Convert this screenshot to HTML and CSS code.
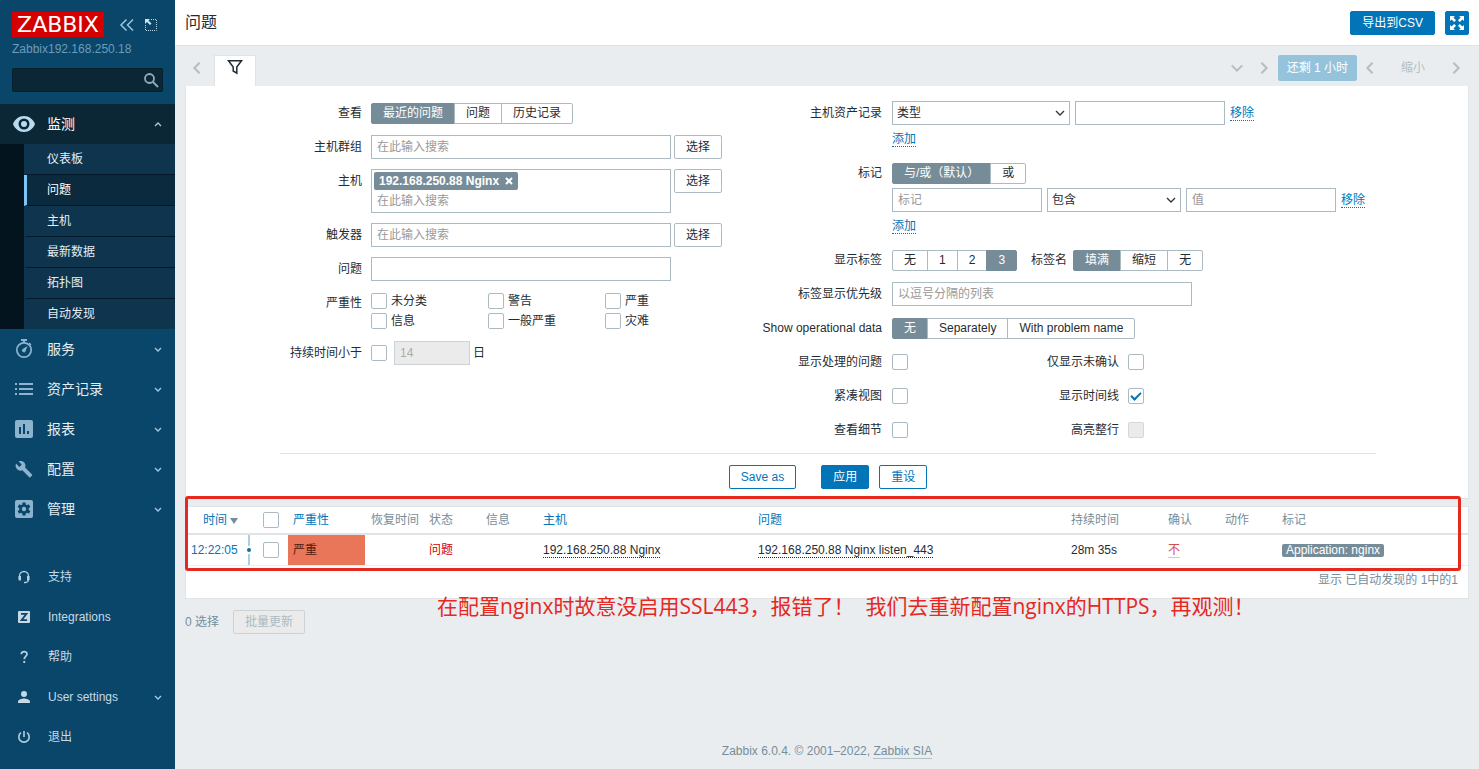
FILE: index.html
```html
<!DOCTYPE html>
<html lang="zh-CN">
<head>
<meta charset="utf-8">
<meta name="viewport" content="width=device-width, initial-scale=1">
<title>问题</title>
<link rel="stylesheet" href="styles.css">
</head>
<body>
<aside class="sidebar">
  <div class="side-head">
    <div class="brand">
      <a class="logo" href="#">ZABBIX</a>
      <button class="icon-btn" type="button" aria-label="收起"><svg width="16" height="16" viewBox="0 0 16 16" fill="none" stroke="#9fc4dd" stroke-width="1.5"><path d="M7.5 2.5 2 8l5.500 5.500M14 2.500 8.500 8l5.500 5.500"/></svg></button>
      <button class="icon-btn" type="button" aria-label="隐藏"><svg width="16" height="16" viewBox="0 0 16 16"><path d="M8 2.500h5.500v11h-11V8" fill="none" stroke="#b9d6e8" stroke-dasharray="1 1"/><path d="M2 2h5L5.500 3.500 8.500 6.500l-1.500 1.500-3-3L2 7z" fill="#cfe3f0"/></svg></button>
    </div>
    <div class="server">Zabbix192.168.250.18</div>
    <form class="search">
      <input type="text" aria-label="搜索">
      <button class="icon-btn" type="button" aria-label="搜索"><svg width="16" height="16" viewBox="0 0 16 16" fill="none" stroke="#8fadbe" stroke-width="1.800"><circle cx="6.500" cy="6.500" r="4.500"/><path d="m10 10 5 5"/></svg></button>
    </form>
  </div>
  <nav class="menu">
    <a class="item open" href="#"><svg class="ico" viewBox="0 0 24 24"><path fill="#b9dbf0" fill-rule="evenodd" d="M12 4C7 4 2.700 7.300 1 12c1.700 4.700 6 8 11 8s9.300-3.300 11-8c-1.700-4.700-6-8-11-8zm0 13.500a5.500 5.500 0 1 1 0-11 5.500 5.500 0 0 1 0 11zM12 9a3 3 0 1 0 0 6 3 3 0 0 0 0-6z"/></svg><span>监测</span><svg class="chev" viewBox="0 0 8 8"><path d="m1 6 3-3 3 3"/></svg></a>
    <div class="submenu">
      <a href="#">仪表板</a>
      <a class="active" href="#">问题</a>
      <a href="#">主机</a>
      <a href="#">最新数据</a>
      <a href="#">拓扑图</a>
      <a href="#">自动发现</a>
    </div>
    <a class="item" href="#"><svg class="ico" viewBox="0 0 24 24"><path d="M9 3h6" stroke="#8cb4cf" stroke-width="2"/><circle cx="12" cy="13" r="7.200" fill="none" stroke="#8cb4cf" stroke-width="1.700"/><path d="m15.500 9-2 5.200a1.800 1.800 0 1 1-2.700-2.200zM17.500 5.500l2 2-1 1-2-2zM11 3h2v3h-2z" fill="#8cb4cf"/></svg><span>服务</span><svg class="chev" viewBox="0 0 8 8"><path d="m1 3 3 3 3-3"/></svg></a>
    <a class="item" href="#"><svg class="ico" viewBox="0 0 24 24"><path fill="#8cb4cf" d="M3 6h2v2H3zm0 5h2v2H3zm0 5h2v2H3zM7 6h14v2H7zm0 5h14v2H7zm0 5h14v2H7z"/></svg><span>资产记录</span><svg class="chev" viewBox="0 0 8 8"><path d="m1 3 3 3 3-3"/></svg></a>
    <a class="item" href="#"><svg class="ico" viewBox="0 0 24 24"><path fill="#8cb4cf" fill-rule="evenodd" d="M5 3h14a2 2 0 0 1 2 2v14a2 2 0 0 1-2 2H5a2 2 0 0 1-2-2V5a2 2 0 0 1 2-2zm2 7v7h2v-7zm4-3v10h2V7zm4 7v3h2v-3z"/></svg><span>报表</span><svg class="chev" viewBox="0 0 8 8"><path d="m1 3 3 3 3-3"/></svg></a>
    <a class="item" href="#"><svg class="ico" viewBox="-1 -1 26 26"><path fill="#8cb4cf" d="m20.700 18-7.500-7.500c.8-1.900.4-4.200-1.200-5.700-1.600-1.700-4-2-6-1.100l3.500 3.500L7 9.700 3.400 6.100C2.400 8 2.800 10.500 4.500 12.200c1.500 1.500 3.800 2 5.700 1.200l7.500 7.500c.4.400.9.400 1.200 0l1.800-1.800c.4-.3.400-.9 0-1.100z"/></svg><span>配置</span><svg class="chev" viewBox="0 0 8 8"><path d="m1 3 3 3 3-3"/></svg></a>
    <a class="item" href="#"><svg class="ico" viewBox="0 0 24 24"><rect x="3" y="3" width="18" height="18" rx="2" fill="#8cb4cf"/><path d="M12 5.500v13M6.400 8.700l11.200 6.600M6.400 15.300l11.200-6.600" stroke="#0a466a" stroke-width="3.200"/><circle cx="12" cy="12" r="4.800" fill="#0a466a"/><circle cx="12" cy="12" r="2.200" fill="#8cb4cf"/></svg><span>管理</span><svg class="chev" viewBox="0 0 8 8"><path d="m1 3 3 3 3-3"/></svg></a>
  </nav>
  <nav class="menu user-menu">
    <a class="item" href="#"><svg class="ico" viewBox="0 0 24 24"><path d="M7.500 14v-3a4.500 4.500 0 0 1 9 0v4a3 3 0 0 1-3 2.500H12" fill="none" stroke="#b5cfdf" stroke-width="1.300"/><path d="M6.500 11H9v4.500H7.500a1 1 0 0 1-1-1zM15 11h2.500v3.500a1 1 0 0 1-1 1H15z" fill="#b5cfdf"/></svg><span>支持</span></a>
    <a class="item" href="#"><svg class="ico" viewBox="0 0 24 24"><rect x="6" y="6" width="12" height="12" rx="1" fill="#c5d8e4"/><path d="M9 8.800h5.500L9.500 15.200H15" fill="none" stroke="#0a466a" stroke-width="1.700"/></svg><span>Integrations</span></a>
    <a class="item" href="#"><svg class="ico" viewBox="0 0 24 24"><path d="M9.300 9.300C9.300 5.800 15 5.800 15 9c0 2.300-2.800 2.400-2.800 5.200" fill="none" stroke="#b5cfdf" stroke-width="1.700"/><path d="M11.300 16h1.900v2h-1.900z" fill="#b5cfdf"/></svg><span>帮助</span></a>
    <a class="item" href="#"><svg class="ico" viewBox="0 0 24 24"><circle cx="12" cy="9" r="3" fill="#c5d8e4"/><path d="M6 18v-1.500c0-2 4-3 6-3s6 1 6 3V18z" fill="#c5d8e4"/></svg><span>User settings</span><svg class="chev" viewBox="0 0 8 8"><path d="m1 3 3 3 3-3"/></svg></a>
    <a class="item" href="#"><svg class="ico" viewBox="0 0 24 24"><path d="M12 6v6M9 7.700a5.200 5.200 0 1 0 6 0" fill="none" stroke="#b5cfdf" stroke-width="1.600"/></svg><span>退出</span></a>
  </nav>
</aside>

<div class="page">
  <header class="topbar">
    <h1>问题</h1>
    <button class="btn primary" type="button">导出到CSV</button>
    <button class="btn primary square" type="button" aria-label="全屏"><svg width="16" height="16" viewBox="0 0 16 16"><path fill="#fff" d="M1 1h5L4.400 2.600 7 5.200 5.200 7 2.600 4.400 1 6zM15 1v5l-1.600-1.600L10.800 7 9 5.200l2.600-2.600L10 1zM1 15v-5l1.600 1.600L5.200 9 7 10.800l-2.600 2.600L6 15zM15 15h-5l1.600-1.600L9 10.800 10.800 9l2.600 2.600L15 10z"/></svg></button>
  </header>

  <main class="content">
    <div class="tabs">
      <button class="nav-btn" type="button" aria-label="上一个"><svg viewBox="0 0 16 16"><path d="m11 2-6 6 6 6"/></svg></button>
      <button class="tab" type="button" aria-label="过滤器"><svg width="16" height="16" viewBox="0 0 16 16"><path d="M1.500 1.800h13L9.800 8v6.200L6.200 12V8z" fill="none" stroke="#1f2c33" stroke-width="1.500"/></svg></button>
      <div class="time-nav">
        <button class="nav-btn" type="button" aria-label="展开"><svg viewBox="0 0 16 16"><path d="m2 5 6 6 6-6"/></svg></button>
        <button class="nav-btn" type="button" aria-label="下一个"><svg viewBox="0 0 16 16"><path d="m5 2 6 6-6 6"/></svg></button>
        <button class="range" type="button">还剩 1 小时</button>
        <button class="nav-btn" type="button" aria-label="向前"><svg viewBox="0 0 16 16"><path d="m11 2-6 6 6 6"/></svg></button>
        <button class="zoom-out" type="button" disabled>缩小</button>
        <button class="nav-btn" type="button" aria-label="向后"><svg viewBox="0 0 16 16"><path d="m5 2 6 6-6 6"/></svg></button>
      </div>
    </div>

    <form class="filter">
      <div class="filter-body">
        <div class="col left">
          <span class="lab">查看</span>
          <div class="line"><div class="seg" role="radiogroup" aria-label="查看">
            <label><input type="radio" name="show" checked><span>最近的问题</span></label><label><input type="radio" name="show"><span>问题</span></label><label><input type="radio" name="show"><span>历史记录</span></label>
          </div></div>
          <label class="lab" for="groups">主机群组</label>
          <div class="line tight"><div class="multi"><input id="groups" type="text" placeholder="在此输入搜索"></div><button class="btn plain" type="button">选择</button></div>
          <label class="lab" for="hosts">主机</label>
          <div class="line tight"><div class="multi"><span class="chip">192.168.250.88 Nginx<button type="button" aria-label="删除"><svg width="8" height="8" viewBox="0 0 8 8"><path d="m1 1 6 6M7 1 1 7" stroke="#fff" stroke-width="2"/></svg></button></span><input id="hosts" type="text" placeholder="在此输入搜索"></div><button class="btn plain" type="button">选择</button></div>
          <label class="lab" for="triggers">触发器</label>
          <div class="line tight"><div class="multi"><input id="triggers" type="text" placeholder="在此输入搜索"></div><button class="btn plain" type="button">选择</button></div>
          <label class="lab" for="problem">问题</label>
          <div class="line"><input class="text wide" id="problem" type="text"></div>
          <span class="lab">严重性</span>
          <div class="sev-grid">
            <label><input type="checkbox">未分类</label><label><input type="checkbox">警告</label><label><input type="checkbox">严重</label>
            <label><input type="checkbox">信息</label><label><input type="checkbox">一般严重</label><label><input type="checkbox">灾难</label>
          </div>
          <label class="lab" for="age">持续时间小于</label>
          <div class="line age"><input id="age" type="checkbox"><input class="text days" type="text" value="14" aria-label="天数" disabled><span>日</span></div>
        </div>

        <div class="col right">
          <label class="lab" for="inv">主机资产记录</label>
          <div class="stack">
            <div class="line fields"><select id="inv" class="inv"><option>类型</option></select><input class="text short" type="text" aria-label="资产值"><a class="link" href="#">移除</a></div>
            <div class="add"><a class="link" href="#">添加</a></div>
          </div>
          <span class="lab">标记</span>
          <div class="stack">
            <div class="line"><div class="seg" role="radiogroup" aria-label="标记">
              <label><input type="radio" name="eval" checked><span>与/或（默认）</span></label><label><input type="radio" name="eval"><span>或</span></label>
            </div></div>
            <div class="line fields"><input class="text short" type="text" placeholder="标记" aria-label="标记"><select class="op" aria-label="运算符"><option>包含</option></select><input class="text short" type="text" placeholder="值" aria-label="值"><a class="link" href="#">移除</a></div>
            <div class="add"><a class="link" href="#">添加</a></div>
          </div>
          <span class="lab">显示标签</span>
          <div class="line">
            <div class="seg" role="radiogroup" aria-label="显示标签">
              <label><input type="radio" name="tags"><span>无</span></label><label><input type="radio" name="tags"><span>1</span></label><label><input type="radio" name="tags"><span>2</span></label><label><input type="radio" name="tags" checked><span>3</span></label>
            </div>
            <span class="mid-lab">标签名</span>
            <div class="seg" role="radiogroup" aria-label="标签名">
              <label><input type="radio" name="tagname" checked><span>填满</span></label><label><input type="radio" name="tagname"><span>缩短</span></label><label><input type="radio" name="tagname"><span>无</span></label>
            </div>
          </div>
          <label class="lab" for="prio">标签显示优先级</label>
          <div class="line"><input class="text wide" id="prio" type="text" placeholder="以逗号分隔的列表"></div>
          <span class="lab">Show operational data</span>
          <div class="line"><div class="seg" role="radiogroup" aria-label="Show operational data">
            <label><input type="radio" name="opdata" checked><span>无</span></label><label><input type="radio" name="opdata"><span>Separately</span></label><label><input type="radio" name="opdata"><span>With problem name</span></label>
          </div></div>
          <label class="lab" for="c1">显示处理的问题</label>
          <div class="pair"><input id="c1" type="checkbox"><label for="c2">仅显示未确认</label><input id="c2" type="checkbox"></div>
          <label class="lab" for="c3">紧凑视图</label>
          <div class="pair"><input id="c3" type="checkbox"><label for="c4">显示时间线</label><input id="c4" type="checkbox" checked></div>
          <label class="lab" for="c5">查看细节</label>
          <div class="pair"><input id="c5" type="checkbox"><label for="c6">高亮整行</label><input id="c6" type="checkbox" disabled></div>
        </div>
      </div>
      <div class="actions">
        <button class="btn outline save" type="button">Save as</button>
        <button class="btn primary" type="button">应用</button>
        <button class="btn outline" type="button">重设</button>
      </div>
    </form>

    <section class="results">
      <div class="panel">
        <table>
          <colgroup><col class="w-time"><col class="w-check"><col class="w-sev"><col class="w-rec"><col class="w-s"><col class="w-s"><col class="w-host"><col><col class="w-dur"><col class="w-s"><col class="w-s"><col class="w-tags"></colgroup>
          <thead>
            <tr><th class="r sort"><a href="#">时间</a><i class="tri"></i></th><th class="c"><input type="checkbox" aria-label="全选"></th><th><a href="#">严重性</a></th><th class="r">恢复时间</th><th>状态</th><th>信息</th><th><a href="#">主机</a></th><th><a href="#">问题</a></th><th>持续时间</th><th>确认</th><th>动作</th><th>标记</th></tr>
          </thead>
          <tbody>
            <tr><td class="time"><a href="#">12:22:05</a></td><td class="c"><input type="checkbox" aria-label="选择"></td><td class="high">严重</td><td></td><td class="red">问题</td><td></td><td><a class="dotted" href="#">192.168.250.88 Nginx</a></td><td><a class="dotted" href="#">192.168.250.88 Nginx listen_443</a></td><td>28m 35s</td><td><a class="ack" href="#">不</a></td><td></td><td><span class="tag">Application: nginx</span></td></tr>
          </tbody>
        </table>
        <div class="count">显示 已自动发现的 1中的1</div>
      </div>
      <div class="mark-box"></div>
      <p class="mark-text">在配置nginx时故意没启用SSL443，报错了！&nbsp; 我们去重新配置nginx的HTTPS，再观测！</p>
    </section>

    <div class="bulk"><span>0 选择</span><button class="btn" type="button" disabled>批量更新</button></div>
  </main>
  <footer>Zabbix 6.0.4. © 2001–2022, <a href="#">Zabbix SIA</a></footer>
</div>
</body>
</html>
```

FILE: styles.css
```css
*, *::before, *::after { box-sizing: border-box; }

body {
  margin: 0;
  display: flex;
  min-height: 100vh;
  background: #e9edf0;
  color: #1f2c33;
  font: 12px/16px "Liberation Sans", "Noto Sans CJK SC", sans-serif;
}

a { color: #0275b8; text-decoration: none; }
button, input, select { font: inherit; color: inherit; }
button { cursor: pointer; }

/* Sidebar */
.sidebar {
  flex: 0 0 175px;
  min-width: 0;
  display: flex;
  flex-direction: column;
  background: #0a466a;
}
.side-head { padding: 12px; }
.brand { display: flex; align-items: center; height: 25px; gap: 8px; }
.logo {
  width: 92px;
  margin-right: 7px;
  background: #d40000;
  color: #fff;
  font: 22px/25px "DejaVu Sans", sans-serif;
  text-align: center;
}
.icon-btn { display: flex; padding: 0; border: 0; background: none; }
.server { margin-top: 4px; color: #6f9bb8; }
.search {
  display: flex;
  align-items: center;
  height: 24px;
  margin-top: 11px;
  padding-right: 3px;
  border: 1px solid #06202f;
  border-radius: 2px;
  background: #0b2635;
}
.search input { flex: 1; width: 0; min-width: 0; border: 0; background: none; color: #fff; }
.item {
  display: flex;
  align-items: center;
  height: 40px;
  padding: 0 13px 0 12px;
  color: #e3eef5;
  font-size: 14px;
}
.item span { flex: 1; margin-left: 11px; }
.item.open { background: #0b2635; color: #fff; }
.ico { width: 24px; height: 24px; }
.chev { width: 8px; height: 8px; fill: none; stroke: #a9cbe0; stroke-width: 1.3; }
.submenu { padding-left: 24px; background: #03141e; }
.submenu a {
  display: block;
  height: 31px;
  padding-left: 20px;
  border-bottom: 1px solid #04182a;
  border-left: 3px solid #0f344d;
  background: #0f344d;
  color: #e3eef5;
  line-height: 30px;
}
.submenu a:last-child { height: 30px; border-bottom: 0; }
.submenu .active { border-left-color: #7cc4f5; background: #0b2a3e; color: #fff; }
.user-menu { margin-top: auto; padding-bottom: 12px; }
.user-menu .item { font-size: 12px; color: #c5dae7; }
.user-menu span { margin-left: 12px; }

/* Page frame */
.page { flex: 1; min-width: 0; display: flex; flex-direction: column; }
.topbar {
  display: flex;
  align-items: center;
  gap: 10px;
  height: 46px;
  padding: 0 10px;
  border-bottom: 1px solid #dfe4e7;
  background: #fff;
}
h1 { flex: 1; margin: 0; font-size: 16px; font-weight: 400; line-height: 24px; }
.content { padding: 0 10px; }
footer { margin-top: auto; padding-bottom: 10px; text-align: center; color: #768d99; }
footer a { color: #768d99; border-bottom: 1px solid #b4c0c7; }

.btn {
  height: 24px;
  padding: 0 11px;
  border: 1px solid #0275b8;
  border-radius: 2px;
  background: #fff;
  line-height: 22px;
  white-space: nowrap;
}
.primary { background: #0275b8; color: #fff; }
.outline { color: #0275b8; }
.plain { border-color: #acbbc2; }
.square { display: flex; align-items: center; justify-content: center; width: 24px; padding: 0; }
.btn:disabled { border-color: #ccd2d6; background: #ebebeb; color: #acbbc2; }

/* Tab strip */
.tabs { display: flex; align-items: flex-end; height: 40px; }
.nav-btn { display: flex; align-items: center; justify-content: center; width: 24px; height: 36px; padding: 0; border: 0; background: none; }
.nav-btn svg { width: 14px; height: 14px; fill: none; stroke: #b4bfc5; stroke-width: 2.4; }
.tab {
  width: 42px;
  height: 31px;
  margin-left: 5px;
  padding: 0 0 8px;
  border: 1px solid #dfe4e7;
  border-bottom: 0;
  background: #fff;
}
.tab svg { display: block; margin: 0 auto; }
.time-nav { display: flex; align-items: center; margin-left: auto; }
.time-nav .nav-btn { width: 27px; }
.range { height: 26px; padding: 0 9px; border: 0; border-radius: 2px; background: #96c3dc; color: #fff; line-height: 26px; }
.zoom-out { padding: 0 17px; border: 0; background: none; color: #b4bfc5; }

/* Filter */
.filter { padding: 15px 9px 9px 11px; border: 1px solid #dfe4e7; border-top: 0; background: #fff; }
.filter-body {
  display: flex;
  justify-content: center;
  gap: 40px;
  width: fit-content;
  margin: 0 auto;
  padding-bottom: 11px;
  border-bottom: 1px solid #dfe4e7;
}
.col { display: grid; row-gap: 10px; align-content: start; }
.left { grid-template-columns: 82px 351px; column-gap: 9px; }
.right { grid-template-columns: 120px 484px; column-gap: 10px; }
.lab { line-height: 24px; text-align: right; white-space: nowrap; }
.line { display: flex; align-items: center; min-height: 24px; }
.tight { gap: 3px; align-items: flex-start; }
.fields { gap: 5px; }
.stack { display: grid; gap: 3px; }
.add { height: 23px; line-height: 23px; }
.link { border-bottom: 1px dotted #0275b8; line-height: 14px; }
.add .link { display: inline-block; }
.mid-lab { margin: 0 6px 0 14px; }

.text, .multi, select { height: 24px; border: 1px solid #acbbc2; border-radius: 0; background: #fff; }
.text { padding: 0 5px; }
.wide { width: 300px; }
.short { width: 150px; }
select {
  appearance: none;
  padding: 0 20px 0 4px;
  background: #fff url("data:image/svg+xml,%3Csvg xmlns='http://www.w3.org/2000/svg' width='10' height='10' fill='none' stroke='%23333' stroke-width='1.300'%3E%3Cpath d='m1 3 4 4 4-4'/%3E%3C/svg%3E") no-repeat right 4px center;
}
.inv { width: 178px; }
.op { width: 134px; }
.multi { width: 300px; height: auto; padding: 2px; }
.multi input { display: block; width: 100%; height: 18px; padding: 0 3px; border: 0; background: none; }
::placeholder { color: #999; opacity: 1; }
.chip {
  display: flex;
  align-items: center;
  width: fit-content;
  height: 18px;
  margin-bottom: 2px;
  padding: 0 5px;
  border-radius: 2px;
  background: #768d99;
  color: #fff;
  font-weight: 700;
}
.chip button { display: flex; margin-left: 6px; padding: 0; border: 0; background: none; }
.text:disabled { border-color: #ccd2d6; background: #ebebeb; color: #acacac; }
.days { width: 76px; margin: 0 3px 0 7px; }

.seg { display: flex; }
.seg input { position: absolute; opacity: 0; pointer-events: none; }
.seg span { display: block; height: 21px; padding: 0 11px; border: 1px solid #acbbc2; line-height: 18px; }
.seg label + label { margin-left: -1px; }
.seg label:first-child span { border-radius: 2px 0 0 2px; }
.seg label:last-child span { border-radius: 0 2px 2px 0; }
.seg :checked + span { border-color: #768d99; background: #768d99; color: #fff; }

input[type="checkbox"] {
  appearance: none;
  flex: none;
  width: 16px;
  height: 16px;
  margin: 0;
  border: 1px solid #acbbc2;
  border-radius: 2px;
  background: #fff;
}
input[type="checkbox"]:checked::before {
  content: "";
  display: block;
  width: 10px;
  height: 6px;
  margin: 3px auto;
  border: solid #0275b8;
  border-width: 0 0 2px 2px;
  transform: rotate(-45deg);
}
input[type="checkbox"]:disabled { border-color: #d3d8db; background: #ebebeb; }
.sev-grid { display: grid; grid-template-columns: repeat(3, 117px); grid-auto-rows: 20px; }
.sev-grid label { display: flex; align-items: center; gap: 4px; }
.pair { display: grid; grid-template-columns: 16px 211px 16px; align-items: center; height: 24px; }
.pair label { text-align: right; }
.pair input:last-child { margin-left: 9px; }
.actions { display: flex; justify-content: center; gap: 10px; padding-top: 11px; }
.save { margin-right: 15px; }

/* Results */
.results { position: relative; margin-top: 7px; }
.panel { border: 1px solid #dfe4e7; background: #fff; }
table { width: 100%; border-collapse: collapse; table-layout: fixed; }
.w-time { width: 63px; }
.w-check { width: 39px; }
.w-sev { width: 77px; }
.w-rec { width: 59px; }
.w-s { width: 57px; }
.w-host { width: 215px; }
.w-dur { width: 97px; }
.w-tags { width: 191px; }
th, td { padding: 0 5px; text-align: left; font-weight: 400; white-space: nowrap; }
th { height: 27px; border-bottom: 2px solid #dfe4e7; color: #768d99; }
td { height: 31px; border-bottom: 1px solid #ebeef0; }
th.r { text-align: right; }
th.sort { padding-right: 11px; }
.tri { display: inline-block; margin-left: 3px; border: 4px solid transparent; border-top: 6px solid #768d99; border-bottom: 0; }
th.c, td.c { padding-left: 10px; text-align: center; }
.c input { display: block; margin: 0 auto; }
.time { position: relative; }
.time::before {
  content: "";
  position: absolute;
  top: 0;
  bottom: 0;
  right: -1px;
  width: 2px;
  background: #a8d0de;
}
.time::after {
  content: "";
  position: absolute;
  top: 50%;
  right: -4px;
  width: 8px;
  height: 8px;
  margin-top: -4px;
  border: 2px solid #fff;
  border-radius: 50%;
  background: #0f6f9a;
}
.high { background: #e97659; color: #52190b; }
.red { color: #d40000; }
.dotted { border-bottom: 1px dotted #1f2c33; color: #1f2c33; }
.ack { border-bottom: 1px solid #c3cdd2; color: #d64e4e; }
.tag { display: inline-block; padding: 0 4px; border-radius: 2px; background: #768d99; color: #fff; line-height: 13px; vertical-align: middle; }
.count { padding: 0 10px 4px; color: #768d99; line-height: 28px; text-align: right; }
.mark-box { position: absolute; top: -10px; left: 0; right: 8px; height: 75px; border: 3px solid #e6281f; border-radius: 3px; }
.mark-text {
  position: absolute;
  top: 85px;
  left: 252px;
  margin: 0;
  color: #e6281f;
  font: 21px/30px "Open Sans", "Noto Sans CJK SC", sans-serif;
  white-space: nowrap;
}
.bulk { display: flex; align-items: center; gap: 14px; margin-top: 11px; color: #768d99; }
```
